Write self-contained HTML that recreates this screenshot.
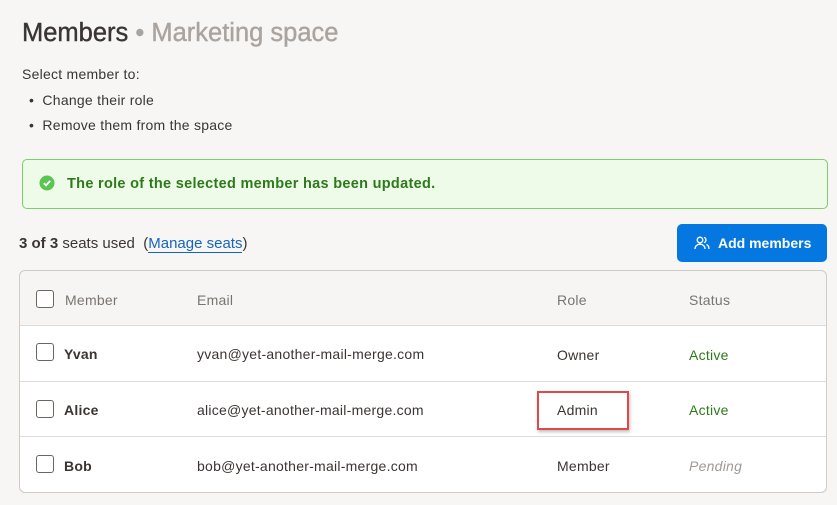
<!DOCTYPE html>
<html><head><style>
*{margin:0;padding:0;box-sizing:border-box}
body{width:837px;height:505px;background:#f7f6f4;font-family:"Liberation Sans",sans-serif;color:#3a3533;position:relative;overflow:hidden}
.a{position:absolute;white-space:nowrap}
.cb{position:absolute;width:18px;height:18px;border:1.5px solid #6b6661;border-radius:3px;background:#fff}
.row{position:absolute;left:20px;width:806px;background:#fff;border-top:1px solid #dedbd8}
.t{font-size:14px;letter-spacing:.25px}
</style></head><body>
<div class="a" style="left:22px;top:19px;font-size:25.5px;letter-spacing:0;color:#3a3533;-webkit-text-stroke:.4px #3a3533">Members <span style="color:#aaa4a0;-webkit-text-stroke:.4px #aaa4a0">• Marketing space</span></div>
<div class="a t" style="left:22px;top:66px">Select member to:</div>
<div class="a t" style="left:29px;top:92px">•&nbsp;&nbsp;Change their role</div>
<div class="a t" style="left:29px;top:117px">•&nbsp;&nbsp;Remove them from the space</div>
<div class="a" style="left:22px;top:159px;width:806px;height:50px;background:#eefbe8;border:1px solid #7dce68;border-radius:5px"></div>
<svg class="a" style="left:39px;top:175px" width="16" height="16" viewBox="0 0 16 16"><circle cx="8" cy="8" r="7.5" fill="#5cc452"/><path d="M4.8 8.2l2.2 2.1 4.2-4.4" stroke="#fff" stroke-width="1.8" fill="none"/></svg>
<div class="a" style="left:67px;top:176px;font-size:14.5px;letter-spacing:.3px;font-weight:bold;color:#2d7a1c">The role of the selected member has been updated.</div>
<div class="a" style="left:19px;top:235px;font-size:15px"><b>3 of 3</b> seats used&nbsp; (<span style="color:#1565c0;border-bottom:1px solid #1565c0">Manage seats</span>)</div>
<div class="a" style="left:677px;top:224px;width:150px;height:38px;background:#0477e1;border-radius:5px"></div>
<svg class="a" style="left:694px;top:235px" width="16" height="16" viewBox="0 0 16 16" fill="none" stroke="#fff" stroke-width="1.3"><circle cx="6" cy="5" r="2.8"/><path d="M1 14c0-3 2.2-4.8 5-4.8s5 1.8 5 4.8"/><path d="M10 2.4a2.7 2.7 0 010 5.2M12.5 9.5c1.5.7 2.5 2.2 2.5 4.5"/></svg>
<div class="a" style="left:718px;top:235px;font-size:14px;font-weight:bold;color:#fff">Add members</div>
<div class="a" style="left:19px;top:270px;width:808px;height:223px;background:#f6f5f3;border:1px solid #cfcbc7;border-radius:6px;overflow:hidden">
</div>
<div class="row" style="top:325px;height:56px"></div>
<div class="row" style="top:381px;height:56px"></div>
<div class="row" style="top:436px;height:56px;border-radius:0 0 6px 6px"></div>
<div class="cb" style="left:36px;top:290px"></div>
<div class="a t" style="left:65px;top:292px;color:#7a7470">Member</div>
<div class="a t" style="left:197px;top:292px;color:#7a7470">Email</div>
<div class="a t" style="left:557px;top:292px;color:#7a7470">Role</div>
<div class="a t" style="left:689px;top:292px;color:#7a7470">Status</div>
<div class="cb" style="left:36px;top:343px"></div>
<div class="a t" style="left:64px;top:346px;font-weight:bold">Yvan</div>
<div class="a t" style="left:197px;top:346px">yvan@yet-another-mail-merge.com</div>
<div class="a t" style="left:557px;top:347px">Owner</div>
<div class="a t" style="left:689px;top:347px;color:#2d7a1c">Active</div>
<div class="cb" style="left:36px;top:400px"></div>
<div class="a t" style="left:64px;top:402px;font-weight:bold">Alice</div>
<div class="a t" style="left:197px;top:402px">alice@yet-another-mail-merge.com</div>
<div class="a" style="left:537px;top:391px;width:92px;height:39px;border:2px solid #e24848;box-shadow:1px 2px 3px rgba(0,0,0,.25)"></div>
<div class="a t" style="left:557px;top:402px">Admin</div>
<div class="a t" style="left:689px;top:402px;color:#2d7a1c">Active</div>
<div class="cb" style="left:36px;top:455px"></div>
<div class="a t" style="left:64px;top:458px;font-weight:bold">Bob</div>
<div class="a t" style="left:197px;top:458px">bob@yet-another-mail-merge.com</div>
<div class="a t" style="left:557px;top:458px">Member</div>
<div class="a t" style="left:689px;top:458px;color:#a09a96;font-style:italic">Pending</div>
</body></html>
